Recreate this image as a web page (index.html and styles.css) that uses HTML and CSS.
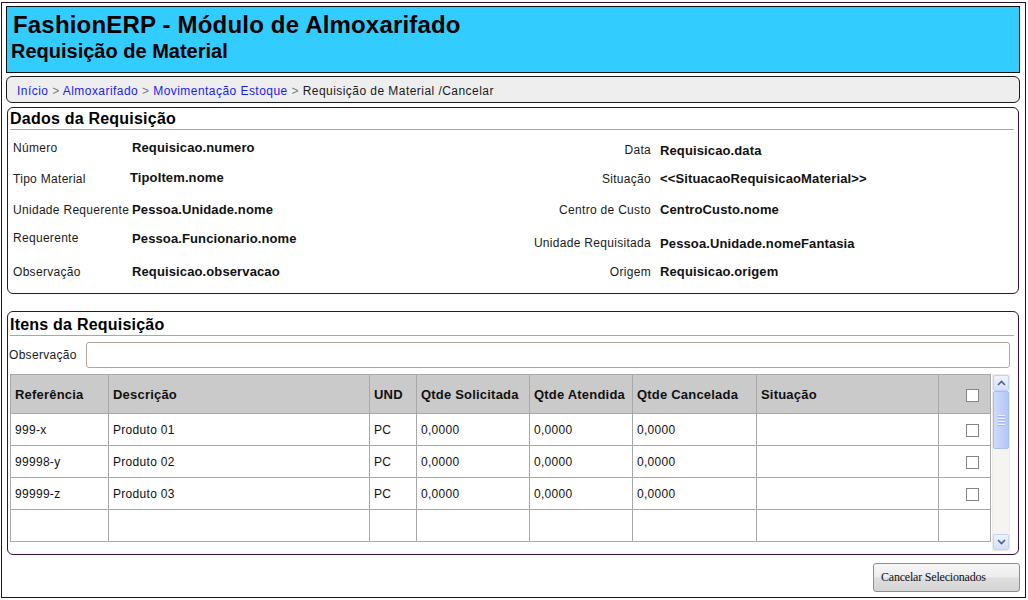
FILE: index.html
```html
<!DOCTYPE html>
<html lang="pt-BR">
<head>
<meta charset="utf-8">
<title>FashionERP - Requisição de Material</title>
<link rel="stylesheet" href="styles.css">
</head>
<body>
<div class="page">
  <header class="banner">
    <h1 class="banner-title">FashionERP - Módulo de Almoxarifado</h1>
    <h2 class="banner-sub">Requisição de Material</h2>
  </header>

  <nav class="crumbs">
    <a class="crumb-link" href="#">Início</a><span class="sep"> &gt; </span><a class="crumb-link" href="#">Almoxarifado</a><span class="sep"> &gt; </span><a class="crumb-link" href="#">Movimentação Estoque</a><span class="sep"> &gt; </span><span class="crumb-current">Requisição de Material /Cancelar</span>
  </nav>

  <section class="panel panel-dados">
    <h3 class="panel-title">Dados da Requisição</h3>
    <div class="fields">
      <span class="lbl">Número</span>
      <span class="val">Requisicao.numero</span>
      <span class="lbl lbl-r down">Data</span>
      <span class="val val-r down">Requisicao.data</span>

      <span class="lbl">Tipo Material</span>
      <span class="val tight">TipoItem.nome</span>
      <span class="lbl lbl-r">Situação</span>
      <span class="val val-r">&lt;&lt;SituacaoRequisicaoMaterial&gt;&gt;</span>

      <span class="lbl">Unidade Requerente</span>
      <span class="val">Pessoa.Unidade.nome</span>
      <span class="lbl lbl-r">Centro de Custo</span>
      <span class="val val-r">CentroCusto.nome</span>

      <span class="lbl up">Requerente</span>
      <span class="val up">Pessoa.Funcionario.nome</span>
      <span class="lbl lbl-r down">Unidade Requisitada</span>
      <span class="val val-r down">Pessoa.Unidade.nomeFantasia</span>

      <span class="lbl">Observação</span>
      <span class="val">Requisicao.observacao</span>
      <span class="lbl lbl-r">Origem</span>
      <span class="val val-r">Requisicao.origem</span>
    </div>
  </section>

  <section class="panel panel-itens">
    <h3 class="panel-title">Itens da Requisição</h3>
    <div class="obs-row">
      <label class="obs-label">Observação</label>
      <div class="obs-input"></div>
    </div>
    <div class="grid-wrap">
      <table class="items">
        <colgroup>
          <col class="c-ref"><col class="c-desc"><col class="c-und"><col class="c-sol"><col class="c-ate"><col class="c-can"><col class="c-sit"><col class="c-chk">
        </colgroup>
        <thead>
          <tr>
            <th>Referência</th><th>Descrição</th><th>UND</th><th>Qtde Solicitada</th><th>Qtde Atendida</th><th>Qtde Cancelada</th><th>Situação</th><th class="chk-cell"><span class="chk"></span></th>
          </tr>
        </thead>
        <tbody>
          <tr>
            <td>999-x</td><td>Produto 01</td><td>PC</td><td>0,0000</td><td>0,0000</td><td>0,0000</td><td></td><td class="chk-cell"><span class="chk"></span></td>
          </tr>
          <tr>
            <td>99998-y</td><td>Produto 02</td><td>PC</td><td>0,0000</td><td>0,0000</td><td>0,0000</td><td></td><td class="chk-cell"><span class="chk"></span></td>
          </tr>
          <tr>
            <td>99999-z</td><td>Produto 03</td><td>PC</td><td>0,0000</td><td>0,0000</td><td>0,0000</td><td></td><td class="chk-cell"><span class="chk"></span></td>
          </tr>
          <tr>
            <td></td><td></td><td></td><td></td><td></td><td></td><td></td><td></td>
          </tr>
        </tbody>
      </table>
      <div class="scrollbar">
        <div class="sb-btn">
          <svg width="9" height="6" viewBox="0 0 9 6"><polyline points="1,5 4.5,1.5 8,5" fill="none" stroke="#4d6185" stroke-width="1.6"/></svg>
        </div>
        <div class="sb-thumb">
          <span class="grip"></span><span class="grip"></span><span class="grip"></span><span class="grip"></span>
        </div>
        <div class="sb-track"></div>
        <div class="sb-btn">
          <svg width="9" height="6" viewBox="0 0 9 6"><polyline points="1,1 4.5,4.5 8,1" fill="none" stroke="#4d6185" stroke-width="1.6"/></svg>
        </div>
      </div>
    </div>
  </section>

  <div class="actions">
    <button class="btn" type="button">Cancelar Selecionados</button>
  </div>
</div>
</body>
</html>
```
FILE: styles.css
```css
html, body {
  margin: 0;
  padding: 0;
  background: #ffffff;
}

body {
  font-family: "Liberation Sans", Arial, sans-serif;
  font-size: 12px;
  letter-spacing: 0.3px;
  color: #111;
}

.page {
  box-sizing: border-box;
  width: 1025px;
  height: 596px;
  margin: 2px 2px 0 1px;
  border: 1px solid #2e0b2e;
  padding: 3px 5px 0 4px;
  display: flex;
  flex-direction: column;
}

/* ---------- banner ---------- */
.banner {
  box-sizing: border-box;
  height: 67px;
  background: #33ccff;
  border: 1px solid #111;
  padding: 4px 0 0 0;
}

.banner-title {
  margin: 0 0 0 6px;
  font-size: 24px;
  line-height: 28px;
  font-weight: bold;
  letter-spacing: 0.18px;
  color: #000;
}

.banner-sub {
  margin: 0 0 0 4px;
  font-size: 20px;
  line-height: 24px;
  font-weight: bold;
  letter-spacing: 0;
  color: #000;
}

/* ---------- breadcrumb ---------- */
.crumbs {
  box-sizing: border-box;
  height: 27px;
  margin-top: 3px;
  background: #eeeeee;
  border: 1px solid #1c1c1c;
  border-radius: 6px;
  padding: 2px 0 0 10px;
  line-height: 24px;
  font-size: 12px;
  letter-spacing: 0.45px;
  white-space: nowrap;
}

.crumb-link {
  color: #1c1cf0;
  text-decoration: none;
}

.sep {
  color: #7a7a7a;
}

.crumb-current {
  color: #1a1a1a;
}

/* ---------- panels ---------- */
.panel {
  box-sizing: border-box;
  margin: 0 1px;
  border: 1px solid #3a0f3a;
  border-radius: 6px;
}

.panel-title {
  margin: 0 4px 0 2px;
  font-size: 16px;
  line-height: 20px;
  font-weight: bold;
  letter-spacing: 0.22px;
  color: #000;
  border-bottom: 1px solid #aca899;
}

.panel-dados {
  margin-top: 4px;
  height: 187px;
}

.panel-dados .panel-title {
  padding-top: 1px;
}

.fields {
  display: grid;
  grid-template-columns: 119px 379px 140px 1fr;
  grid-auto-rows: 31px;
  align-items: center;
  margin-top: 2px;
  padding-left: 5px;
  white-space: nowrap;
}

.lbl {
  color: #1a1a1a;
}

.lbl-r {
  text-align: right;
}

.val {
  font-size: 13px;
  font-weight: bold;
  letter-spacing: 0.12px;
  color: #111;
}

.val-r {
  padding-left: 9px;
}

.tight {
  margin-left: -2px;
  margin-bottom: 3px;
}

.down {
  margin-top: 5px;
}

.up {
  margin-bottom: 5px;
}

.panel-itens {
  margin-top: 17px;
  height: 244px;
}

.panel-itens .panel-title {
  padding-top: 3px;
}

/* ---------- observação ---------- */
.obs-row {
  display: flex;
  align-items: center;
  margin: 6px 8px 0 1px;
}

.obs-label {
  width: 77px;
  flex: none;
  color: #1a1a1a;
}

.obs-input {
  flex: 1;
  box-sizing: border-box;
  height: 26px;
  border: 1px solid #b0a79a;
  border-radius: 3px;
  background: #fff;
}

/* ---------- grid ---------- */
.grid-wrap {
  display: flex;
  align-items: flex-start;
  margin: 6px 0 0 2px;
  height: 177px;
}

.items {
  table-layout: fixed;
  width: 981px;
  border-collapse: separate;
  border-spacing: 0;
  border-left: 1px solid #a8a8a8;
  border-top: 1px solid #a8a8a8;
  flex: none;
}

.c-ref { width: 98px; }
.c-desc { width: 261px; }
.c-und { width: 47px; }
.c-sol { width: 113px; }
.c-ate { width: 103px; }
.c-can { width: 124px; }
.c-sit { width: 182px; }
.c-chk { width: 52px; }

.items th,
.items td {
  box-sizing: border-box;
  border-right: 1px solid #a8a8a8;
  border-bottom: 1px solid #a8a8a8;
  padding: 0 0 0 4px;
  text-align: left;
  vertical-align: middle;
  white-space: nowrap;
  overflow: hidden;
  font-size: 12px;
  color: #111;
}

.items th {
  height: 39px;
  background: #cacaca;
  font-size: 13px;
  font-weight: bold;
  letter-spacing: 0.2px;
}

.items td {
  height: 32px;
  background: #fff;
  letter-spacing: 0.3px;
}

.items .chk-cell {
  text-align: right;
  padding: 0 11px 0 0;
}

.chk {
  display: inline-block;
  box-sizing: border-box;
  width: 13px;
  height: 13px;
  border: 1px solid #858585;
  background: #fff;
  vertical-align: middle;
}

/* ---------- scrollbar ---------- */
.scrollbar {
  box-sizing: border-box;
  width: 18px;
  height: 177px;
  margin-left: 1px;
  display: flex;
  flex-direction: column;
  background: #f5f4f0;
  border: 1px solid #ecebe6;
  flex: none;
}

.sb-btn {
  box-sizing: border-box;
  height: 16px;
  border: 1px solid #c3d1f4;
  border-radius: 2px;
  background: linear-gradient(#eef3fe, #d3dffb);
  display: flex;
  align-items: center;
  justify-content: center;
  flex: none;
}

.sb-thumb {
  box-sizing: border-box;
  height: 58px;
  border: 1px solid #a9bef0;
  border-radius: 2px;
  background: linear-gradient(90deg, #cfdcfd, #bccffb 60%, #b2c7f8);
  display: flex;
  flex-direction: column;
  align-items: center;
  justify-content: center;
  gap: 1px;
  flex: none;
}

.grip {
  display: block;
  width: 7px;
  height: 1px;
  background: #eef3fe;
  border-bottom: 1px solid #9fb6ea;
}

.sb-track {
  flex: 1;
}

/* ---------- actions ---------- */
.actions {
  display: flex;
  justify-content: flex-end;
  margin-top: 8px;
}

.btn {
  box-sizing: border-box;
  width: 147px;
  height: 29px;
  padding: 0 0 0 7px;
  text-align: left;
  font-family: "Liberation Serif", "Times New Roman", serif;
  font-size: 12px;
  letter-spacing: -0.2px;
  color: #111;
  border: 1px solid #8e8f8f;
  border-radius: 3px;
  background: linear-gradient(#f6f6f6 0%, #ececec 48%, #dedede 52%, #d4d4d4 100%);
}
```
